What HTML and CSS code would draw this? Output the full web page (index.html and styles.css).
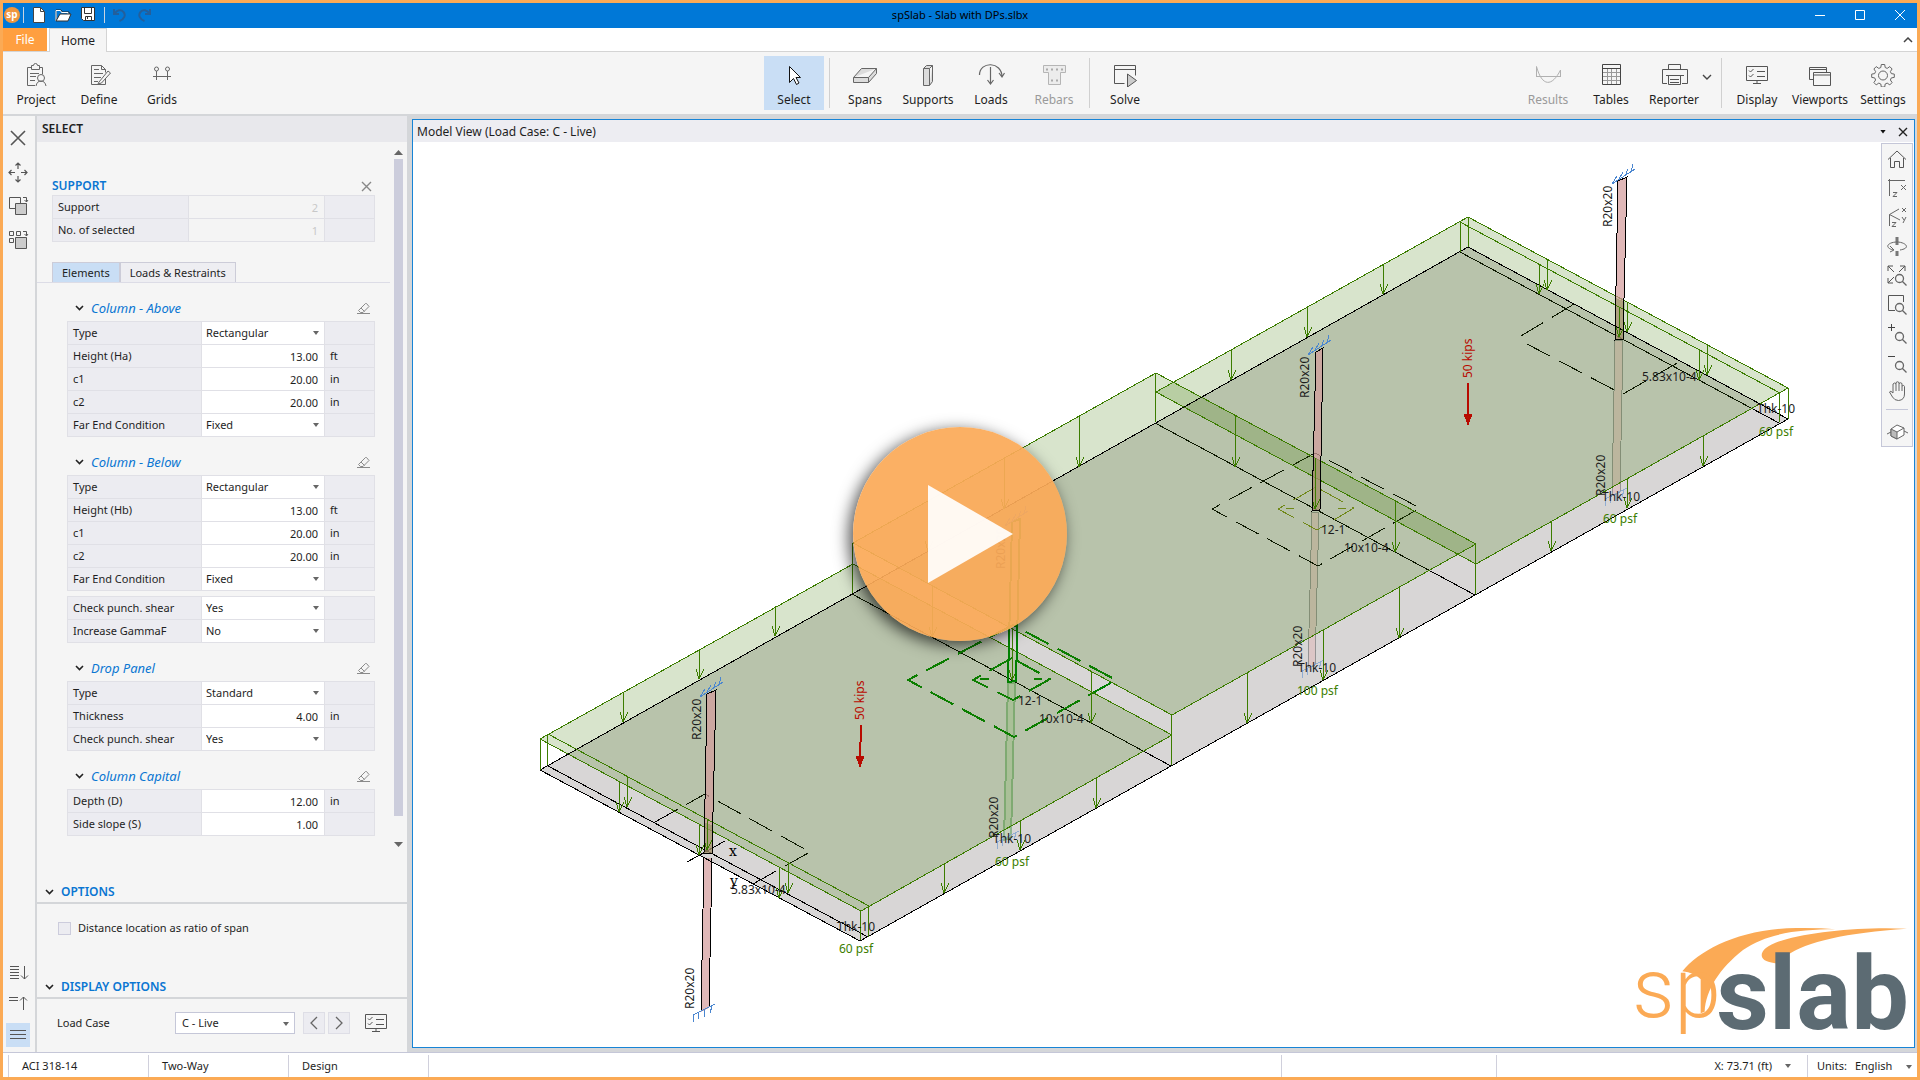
FILE: index.html
```html
<!DOCTYPE html>
<html lang="en">
<head>
<meta charset="utf-8">
<title>spSlab - Slab with DPs.slbx</title>
<link rel="stylesheet" href="styles.css">
</head>
<body>
<svg class="defs" aria-hidden="true">
  <defs>
    <symbol id="eraser" viewBox="0 0 14 12"><path d="M1 11.5h13M2.500 8.500l7-7h1l2.500 3-6 6H4.500l-2-2zM5 6l3.500 3.500" fill="none" stroke="#8a8a8a"/></symbol>
    <symbol id="chev" viewBox="0 0 9 6"><path d="M1 1l3.500 3.500L8 1" fill="none" stroke="#222" stroke-width="1.600"/></symbol>
    <symbol id="monitor" viewBox="0 0 24 20"><path d="M1.500 1.500h21v14h-21zM12 15.500v3M8 18.500h8M4 5.500l1.500 1.500 3-3M4 10.500l1.500 1.500 3-3M12 6.500h8M12 11.500h8" fill="none" stroke="#555"/></symbol>
    <symbol id="lens" viewBox="0 0 24 24"><path d="M10.500 15.500a4 4 0 1 1 8 0a4 4 0 1 1-8 0M17.500 18.500l4 4" fill="none" stroke="#666" stroke-width="1.300"/></symbol>
  </defs>
</svg>

<header class="titlebar">
  <div class="quick">
    <svg class="app-mark" width="16" height="16" viewBox="0 0 16 16"><circle cx="8" cy="8" r="8" fill="#f0963c"/><text x="8" y="11" text-anchor="middle" font-size="10" font-weight="700" fill="#fff">sp</text></svg>
    <span class="bar"></span>
    <button aria-label="New"><svg width="14" height="16" viewBox="0 0 14 16"><path d="M1.500.500h7l4 4v11h-11z" fill="#fff" stroke="#444"/><path d="M8.500.500v4h4" fill="none" stroke="#444"/></svg></button>
    <button aria-label="Open"><svg width="17" height="14" viewBox="0 0 17 14"><path d="M1 13V2h5l1 2h7v2" fill="#0078d7" stroke="#222"/><path d="M1 13V2.500h4.500l1 2H13V6" fill="none" stroke="#fff"/><path d="M1 13l4-7h11l-3 7z" fill="#fff" stroke="#333"/></svg></button>
    <button aria-label="Save"><svg width="15" height="15" viewBox="0 0 15 15"><path d="M.500.500h13v13H2.500l-2-2z" fill="#fff" stroke="#333"/><path d="M3.500.500v6h7v-6M4.500 13.500v-4h6v4M6.500 10v2" fill="none" stroke="#333"/></svg></button>
    <span class="bar second"></span>
    <button aria-label="Undo" disabled><svg width="13" height="14" viewBox="0 0 13 14"><path d="M1 1v5h5M1.500 5.500C4 2 8 1 10.500 4s1 7-4 9" fill="none" stroke="#235f9c" stroke-width="2"/></svg></button>
    <button aria-label="Redo" disabled><svg width="13" height="14" viewBox="0 0 13 14"><path d="M12 1v5H7M11.500 5.500C9 2 5 1 2.500 4s-1 7 4 9" fill="none" stroke="#235f9c" stroke-width="2"/></svg></button>
  </div>
  <h1>spSlab - Slab with DPs.slbx</h1>
  <div class="wincontrols">
    <button aria-label="Minimize"><svg width="12" height="12"><path d="M1 6.500h10" stroke="#fff"/></svg></button>
    <button aria-label="Maximize"><svg width="12" height="12"><path d="M1.500 1.500h9v9h-9z" fill="none" stroke="#fff"/></svg></button>
    <button aria-label="Close"><svg width="12" height="12"><path d="M1 1l10 10M11 1L1 11" stroke="#fff"/></svg></button>
  </div>
</header>

<nav class="tabs">
  <button class="file">File</button>
  <button class="home">Home</button>
  <button class="collapse" aria-label="Collapse ribbon"><svg width="10" height="6" viewBox="0 0 10 6"><path d="M1 5l4-4 4 4" fill="none" stroke="#444" stroke-width="1.500"/></svg></button>
</nav>

<div class="ribbon">
  <div class="group">
    <button class="tool"><svg viewBox="0 0 24 24"><path d="M7 4.500H3.500v18H11M15 4.500h3.500v7M7.500 2.500h2q0-2 2-2t2 2h2v4h-8zM6 10.500h9M6 13.500h6M6 17.500h5" fill="none" stroke="#666"/><circle cx="17" cy="15" r="3.500" fill="#f5f5f5" stroke="#666"/><path d="M12 23q1-5 5-5t5 5" fill="none" stroke="#666"/></svg>Project</button>
    <button class="tool"><svg viewBox="0 0 24 24"><path d="M4.500 2.500h10l4 4v3M18.500 15v6.500h-14v-19M14.500 2.500v4h4M7 6.500h5M7 10.500h9M7 14.500h7M7 18.500h4" fill="none" stroke="#666"/><path d="M12 19l9-11 2.500 2-9 10-3.500 1z" fill="#f5f5f5" stroke="#666"/></svg>Define</button>
    <button class="tool"><svg viewBox="0 0 24 24"><path d="M3 13.500h18M6.500 8v9M17.500 8v9" stroke="#666"/><circle cx="6.500" cy="6" r="2" fill="none" stroke="#666"/><circle cx="17.500" cy="6" r="2" fill="none" stroke="#666"/></svg>Grids</button>
  </div>
  <div class="group">
    <button class="tool on"><svg viewBox="0 0 24 24"><path d="M7.500 3.500v16l4-4 3 6 2.500-1.500-3-5.500h4.500z" fill="#fff" stroke="#111"/></svg>Select</button>
    <span class="sep"></span>
    <button class="tool"><svg viewBox="0 0 26 24"><path d="M1.500 14.500l8-9h15l-8 9zM1.500 14.500v5h15l8-9v-5M16.500 14.500v5" fill="#dcdcdc" stroke="#666"/></svg>Spans</button>
    <button class="tool"><svg viewBox="0 0 24 24"><path d="M7.500 5.500h6v17h-6zM7.500 5.500l3-3h6l-3 3M16.500 2.500v16l-3 4" fill="#dcdcdc" stroke="#666"/></svg>Supports</button>
    <button class="tool"><svg viewBox="0 0 26 24"><path d="M1.500 12C1.500-2 24-2 24 14M21 10l3 4 2.500-4M12.500 4v17M9.500 17l3 4 3-4" fill="none" stroke="#666" stroke-width="1.200"/></svg>Loads</button>
    <button class="tool" disabled><svg viewBox="0 0 24 24"><path d="M1.500 2.500h22v7h-5v12h-12v-12h-5z" fill="#ececec" stroke="#b5b5b5"/><path d="M4 6.500h2M9 6.500h2M14 6.500h2M19 6.500h2M9 17.500h2M14 17.500h2" stroke="#aaa" stroke-width="2"/></svg>Rebars</button>
    <span class="sep"></span>
    <button class="tool"><svg viewBox="0 0 24 24"><path d="M11.500 20.500h-10v-18h21v10M1.500 6.500h21" fill="none" stroke="#555"/><path d="M14.500 11v13l9-6.500z" fill="#ccc" stroke="#555"/></svg>Solve</button>
  </div>
  <div class="group">
    <button class="tool" disabled><svg viewBox="0 0 26 24"><path d="M1.500 14V3.500C7 24 17 24 25.500 7v7M1 13.500h25" fill="none" stroke="#b0b0b0"/></svg>Results</button>
    <button class="tool"><svg viewBox="0 0 24 24"><path d="M3.500 1.500h18v20h-18zM3.500 5.500h18" fill="none" stroke="#444"/><path d="M4 9.500h17M4 13.500h17M4 17.500h17M8.500 6v15M12.500 6v15M17.500 6v15" stroke="#999"/></svg>Tables</button>
    <button class="tool"><svg viewBox="0 0 28 24"><path d="M8.500 6V1.500h12V6M7 20.500H2.500v-14h25v14H22M8.500 12.500h12v9h-12zM6 12.500h18M10 16.500h9M10 19.500h9" fill="none" stroke="#555"/></svg>Reporter</button>
    <button class="more" aria-label="Reporter options"><svg width="10" height="6" viewBox="0 0 10 6"><path d="M1 1l4 4 4-4" fill="none" stroke="#444" stroke-width="1.400"/></svg></button>
    <span class="sep"></span>
    <button class="tool"><svg viewBox="0 -2 24 24"><use href="#monitor" width="24" height="20"/></svg>Display</button>
    <button class="tool"><svg viewBox="0 0 24 24"><path d="M5 16.500H1.500v-12h17V9M1.500 6.500h17M5.500 9.500h17v13h-17zM5.500 12h17" fill="none" stroke="#555"/></svg>Viewports</button>
    <button class="tool"><svg viewBox="0 0 24 24"><path d="M10.300 1.500h3.400l.500 3 2 .900 2.600-1.800 2.300 2.400-1.700 2.500.900 2.100 3 .500v3.300l-3 .500-.900 2.100 1.700 2.500-2.300 2.400-2.600-1.800-2 .900-.500 3h-3.400l-.500-3-2-.900-2.600 1.800-2.300-2.400 1.700-2.500-.900-2.100-3-.500v-3.300l3-.500.900-2.100-1.700-2.500 2.300-2.400 2.600 1.800 2-.900z" fill="none" stroke="#666"/><circle cx="12" cy="12.500" r="4.500" fill="none" stroke="#666"/></svg>Settings</button>
  </div>
</div>

<main class="work">
  <aside class="strip">
    <button aria-label="Delete"><svg viewBox="0 0 24 24"><path d="M5 5l14 14M19 5L5 19" stroke="#555" stroke-width="1.600"/></svg></button>
    <button aria-label="Move"><svg viewBox="0 0 24 24"><path d="M12 9V3M9.500 5.500L12 3l2.500 2.500M12 16v6M9.500 19.500L12 22l2.500-2.500M9 12.500H3M5.500 10L3 12.500 5.500 15M15 12.500h6M18.500 10l2.500 2.500-2.500 2.500" fill="none" stroke="#555" stroke-width="1.200"/></svg></button>
    <button aria-label="Duplicate"><svg viewBox="0 0 24 24"><path d="M9 14.500H3.500v-11h11V9M17 3.500h3.500V8M18.500 6l2 2 1.500-2" fill="none" stroke="#555"/><path d="M9.500 9.500h11v11h-11z" fill="#ccc" stroke="#555"/></svg></button>
    <button aria-label="Duplicate as grid"><svg viewBox="0 0 24 24"><path d="M3.500 3.500h4v4h-4zM10.500 3.500h4v4h-4zM3.500 10.500h4v4h-4zM17 3.500h3.500V8M18.500 6l2 2 1.500-2" fill="none" stroke="#555"/><path d="M9.500 9.500h11v11h-11z" fill="#ccc" stroke="#555"/></svg></button>
    <span class="push"></span>
    <button aria-label="Expand all"><svg viewBox="0 0 24 24"><path d="M4 5.500h9M4 8.500h9M4 11.500h9M4 14.500h9M4 17.500h9M18.500 5v13M15 14.500l3.500 3.500 3.500-3.500" fill="none" stroke="#555"/></svg></button>
    <button aria-label="Collapse all"><svg viewBox="0 0 24 24"><path d="M3 5.500h9M3 8.500h9M17.500 18V5M14 8.500L17.500 5 21 8.500" fill="none" stroke="#555"/></svg></button>
    <button class="on" aria-label="Show list"><svg viewBox="0 0 24 24"><path d="M4 7.500h16M4 11.500h16M4 15.500h16" stroke="#555"/></svg></button>
  </aside>

  <section class="panel">
    <h2 class="head">SELECT</h2>
    <div class="scroller">
      <div class="props">
        <div class="sup"><h3>SUPPORT</h3><button aria-label="Clear selection"><svg width="11" height="11"><path d="M1 1l9 9M10 1l-9 9" stroke="#888" stroke-width="1.400"/></svg></button></div>
        <table class="wide">
          <tr><th><label for="s1">Support</label></th><td class="off"><input id="s1" value="2" disabled></td><td></td></tr>
          <tr><th><label for="s2">No. of selected</label></th><td class="off"><input id="s2" value="1" disabled></td><td></td></tr>
        </table>
        <div class="subtabs"><button class="on">Elements</button><button>Loads &amp; Restraints</button></div>

        <div class="sec"><svg class="cv"><use href="#chev"/></svg><h4>Column - Above</h4><button aria-label="Reset column above"><svg class="er"><use href="#eraser"/></svg></button></div>
        <table>
          <tr><th><label for="a1">Type</label></th><td class="pick"><select id="a1"><option>Rectangular</option></select></td><td></td></tr>
          <tr><th><label for="a2">Height (Ha)</label></th><td><input id="a2" value="13.00"></td><td>ft</td></tr>
          <tr><th><label for="a3">c1</label></th><td><input id="a3" value="20.00"></td><td>in</td></tr>
          <tr><th><label for="a4">c2</label></th><td><input id="a4" value="20.00"></td><td>in</td></tr>
          <tr><th><label for="a5">Far End Condition</label></th><td class="pick"><select id="a5"><option>Fixed</option></select></td><td></td></tr>
        </table>

        <div class="sec"><svg class="cv"><use href="#chev"/></svg><h4>Column - Below</h4><button aria-label="Reset column below"><svg class="er"><use href="#eraser"/></svg></button></div>
        <table>
          <tr><th><label for="b1">Type</label></th><td class="pick"><select id="b1"><option>Rectangular</option></select></td><td></td></tr>
          <tr><th><label for="b2">Height (Hb)</label></th><td><input id="b2" value="13.00"></td><td>ft</td></tr>
          <tr><th><label for="b3">c1</label></th><td><input id="b3" value="20.00"></td><td>in</td></tr>
          <tr><th><label for="b4">c2</label></th><td><input id="b4" value="20.00"></td><td>in</td></tr>
          <tr><th><label for="b5">Far End Condition</label></th><td class="pick"><select id="b5"><option>Fixed</option></select></td><td></td></tr>
        </table>
        <table class="next">
          <tr><th><label for="p1">Check punch. shear</label></th><td class="pick"><select id="p1"><option>Yes</option></select></td><td></td></tr>
          <tr><th><label for="p2">Increase GammaF</label></th><td class="pick"><select id="p2"><option>No</option></select></td><td></td></tr>
        </table>

        <div class="sec"><svg class="cv"><use href="#chev"/></svg><h4>Drop Panel</h4><button aria-label="Reset drop panel"><svg class="er"><use href="#eraser"/></svg></button></div>
        <table>
          <tr><th><label for="d1">Type</label></th><td class="pick"><select id="d1"><option>Standard</option></select></td><td></td></tr>
          <tr><th><label for="d2">Thickness</label></th><td><input id="d2" value="4.00"></td><td>in</td></tr>
          <tr><th><label for="d3">Check punch. shear</label></th><td class="pick"><select id="d3"><option>Yes</option></select></td><td></td></tr>
        </table>

        <div class="sec"><svg class="cv"><use href="#chev"/></svg><h4>Column Capital</h4><button aria-label="Reset column capital"><svg class="er"><use href="#eraser"/></svg></button></div>
        <table>
          <tr><th><label for="c1">Depth (D)</label></th><td><input id="c1" value="12.00"></td><td>in</td></tr>
          <tr><th><label for="c2">Side slope (S)</label></th><td><input id="c2" value="1.00"></td><td></td></tr>
        </table>
      </div>
      <div class="scrollbar"><i class="up"></i><b></b><i class="down"></i></div>
    </div>

    <h3 class="fold"><svg class="cv"><use href="#chev"/></svg>OPTIONS</h3>
    <div class="opts"><label><input type="checkbox">Distance location as ratio of span</label></div>
    <h3 class="fold"><svg class="cv"><use href="#chev"/></svg>DISPLAY OPTIONS</h3>
    <div class="case">
      <label for="lc">Load Case</label>
      <span class="pick boxed"><select id="lc"><option>C - Live</option></select></span>
      <button class="step" aria-label="Previous load case"><svg width="8" height="14"><path d="M7 1L1 7l6 6" fill="none" stroke="#666" stroke-width="1.300"/></svg></button>
      <button class="step" aria-label="Next load case"><svg width="8" height="14"><path d="M1 1l6 6-6 6" fill="none" stroke="#666" stroke-width="1.300"/></svg></button>
      <button class="plain" aria-label="Display settings"><svg width="24" height="20"><use href="#monitor"/></svg></button>
    </div>
  </section>

  <section class="view">
    <div class="viewhead"><h2>Model View (Load Case: C - Live)</h2>
      <button aria-label="View menu"><i class="down dark"></i></button>
      <button aria-label="Close view"><svg width="10" height="10"><path d="M1 1l8 8M9 1L1 9" stroke="#222" stroke-width="1.400"/></svg></button>
    </div>
    <div class="canvas">
      <svg class="model" viewBox="413 142 1501 905">
        <defs>
          <path id="a30" d="M0 0l-1 30M-4 20l3 10 5-10"/>
          <path id="a51" d="M0 0l-1 51M-4 41l3 10 5-10"/>
          <path id="fix" d="M-5 2L18-13M-5 2l5-8M2-3l4-7M8-6l3-7M14-10l2-8"/>
          <path id="fixb" d="M-6 2L16-9M-6 9l1-7M-1 6l1-7M5 4l1-8M11 0l2-7"/>
        </defs>
        <polygon class="slab" points="540,770 1468,247 1788,419 860,941"/>
        <g class="low">
          <path class="pk" d="M1308 668L1312 512H1319L1315 665zM1612 496L1615 340H1623L1620 492z"/>
          <path class="gn" d="M1004 840L1008 683H1015L1011 837z"/>
          <g class="hatch"><use href="#fixb" x="1003" y="840"/><use href="#fixb" x="1308" y="669"/><use href="#fixb" x="1611" y="497"/></g>
        </g>
        <path class="blk" d="M548 766L868 937M1460 252L1779 423M1155 423L1475 595M852 594L1171 766M687 862L725 841"/>
        <g class="dash">
          <path d="M655 822L705 794L810 852L753 884"/>
          <path d="M1574 304L1516 339M1527 344L1622 394M1623 394L1679 362"/>
          <path d="M1315 453L1212 509L1318 566L1420 508z"/>
          <path class="sel" d="M1013 625L908 680L1014 737L1116 680z"/>
          <path class="sel" d="M1012 658L973 680L1013 700L1050 679zM980 679h9M1034 679h8"/>
          <path class="olive" d="M1316 487L1278 509L1317 530L1354 508zM1286 508h8M1338 508h8"/>
        </g>
        <g class="load">
          <polygon points="540,739 861,911 1172,735 853,564"/>
          <polygon points="853,543 1172,715 1476,544 1156,373"/>
          <polygon points="1156,392 1476,564 1788,388 1468,217"/>
        </g>
        <path class="col" d="M704 858L701 1012L709 1008L712 858z"/>
        <path class="col" d="M704 853L707 694L716 690L712 853zM1312 511L1316 352L1323 348L1320 510zM1615 340L1618 181L1627 177L1623 339z"/>
        <path class="shade" d="M704 853V822L713 826L712 853zM1312 511L1314 457L1321 461L1320 510zM1615 340L1616 298L1625 302L1623 339z"/>
        <path class="blk" d="M540 770L1468 247L1788 419L860 941z"/>
        <g class="lines">
          <path d="M548 734L869 906M1460 222L1780 393M540 739V770M548 734L547 766M861 911L860 941M869 906L868 937M853 543L852 594M1172 715L1171 766M1156 373L1155 423M1476 544L1475 595M1788 388V419M1780 393L1779 423M1468 217V247M1460 222V252"/>
          <use href="#a30" x="624" y="692"/><use href="#a30" x="700" y="649"/><use href="#a30" x="776" y="606"/>
          <use href="#a30" x="945" y="863"/><use href="#a30" x="1021" y="820"/><use href="#a30" x="1097" y="778"/>
          <use href="#a30" x="620" y="782"/><use href="#a30" x="700" y="825"/><use href="#a30" x="780" y="868"/>
          <use href="#a30" x="628" y="777"/><use href="#a30" x="708" y="820"/><use href="#a30" x="789" y="863"/>
          <use href="#a30" x="1232" y="350"/><use href="#a30" x="1308" y="307"/><use href="#a30" x="1384" y="264"/>
          <use href="#a30" x="1552" y="521"/><use href="#a30" x="1628" y="478"/><use href="#a30" x="1704" y="436"/>
          <use href="#a30" x="1548" y="260"/><use href="#a30" x="1628" y="302"/><use href="#a30" x="1708" y="345"/>
          <use href="#a30" x="1540" y="264"/><use href="#a30" x="1620" y="307"/><use href="#a30" x="1700" y="350"/>
          <use href="#a51" x="929" y="500"/><use href="#a51" x="1005" y="458"/><use href="#a51" x="1080" y="416"/>
          <use href="#a51" x="1248" y="672"/><use href="#a51" x="1324" y="629"/><use href="#a51" x="1400" y="587"/>
          <use href="#a51" x="933" y="586"/><use href="#a51" x="1013" y="629"/><use href="#a51" x="1092" y="672"/>
          <use href="#a51" x="1236" y="416"/><use href="#a51" x="1316" y="458"/><use href="#a51" x="1396" y="501"/>
        </g>
        <path class="blk" d="M704 858L701 1012M709 1008L712 858M704 853L707 694L716 690L712 853zM1312 511L1316 352L1323 348L1320 510zM1615 340L1618 181L1627 177L1623 339z"/>
        <path class="selcol" d="M1008 682L1012 522L1020 519L1016 681z"/>
        <g class="hatch"><use href="#fix" x="705" y="695"/><use href="#fix" x="1010" y="524"/><use href="#fix" x="1313" y="353"/><use href="#fix" x="1617" y="182"/><use href="#fixb" x="699" y="1013"/></g>
        <g class="point"><path d="M861 725L860 760M1468 383V418"/><path d="M857 757l3 8 3-8zM1465 415l3 8 3-8z"/></g>
        <g class="txt">
          <text transform="translate(701 740) rotate(-90)">R20x20</text>
          <text transform="translate(694 1009) rotate(-90)">R20x20</text>
          <text transform="translate(1005 569) rotate(-90)">R20x20</text>
          <text transform="translate(998 838) rotate(-90)">R20x20</text>
          <text transform="translate(1309 398) rotate(-90)">R20x20</text>
          <text transform="translate(1302 667) rotate(-90)">R20x20</text>
          <text transform="translate(1612 227) rotate(-90)">R20x20</text>
          <text transform="translate(1605 496) rotate(-90)">R20x20</text>
          <text x="837" y="931">Thk-10</text><text x="993" y="843">Thk-10</text><text x="1298" y="672">Thk-10</text><text x="1602" y="501">Thk-10</text><text x="1757" y="413">Thk-10</text>
          <text x="731" y="894">5.83x10-4</text><text x="1642" y="381">5.83x10-4</text>
          <text x="1018" y="705">12-1</text><text x="1321" y="534">12-1</text>
          <text x="1039" y="723">10x10-4</text><text x="1344" y="552">10x10-4</text>
          <text class="axis" x="729" y="856">x</text><text class="axis" x="730" y="886">y</text>
          <g class="psf"><text x="839" y="953">60 psf</text><text x="995" y="866">60 psf</text><text x="1297" y="695">100 psf</text><text x="1603" y="523">60 psf</text><text x="1759" y="436">60 psf</text></g>
          <g class="kips"><text transform="translate(864 720) rotate(-90)">50 kips</text><text transform="translate(1472 378) rotate(-90)">50 kips</text></g>
        </g>
      </svg>

      <div class="viewtools">
        <button aria-label="Home view"><svg viewBox="0 0 24 24"><path d="M3 12.500L12 4l9 8.500M5.500 11v9.500h4v-6h5v6h4V11" fill="none" stroke="#555"/></svg></button>
        <button aria-label="XZ view"><svg viewBox="0 0 24 24"><path d="M3 4.500h17M4.500 3v17" stroke="#666"/><path d="M16 9l5 5M21 9l-5 5M8 16.500h4l-4 4h4" fill="none" stroke="#666"/></svg></button>
        <button aria-label="Isometric view"><svg viewBox="0 0 24 24"><path d="M14 4L4.500 9.500V21M4.500 9.500L15 15" fill="none" stroke="#666"/><path d="M17 3l4 4M21 3l-4 4M17 12l2 3M21 12l-3 6M7 17.500h4l-4 4h4" fill="none" stroke="#666"/></svg></button>
        <button aria-label="Rotate"><svg viewBox="0 0 24 24"><path d="M12 3v8M12 17v5" stroke="#777" stroke-width="3"/><path d="M15 16c12-2 5-8-3-8s-14 5-4 8M5 12l4 4-4 2" fill="none" stroke="#666"/></svg></button>
        <button aria-label="Zoom extents"><svg viewBox="0 0 24 24"><path d="M3 8V3h5M3 3l6 6M15 3h5v5M20 3l-6 6M3 15v5h5M3 20l6-6" fill="none" stroke="#555"/><use href="#lens" width="24" height="24"/></svg></button>
        <button aria-label="Zoom window"><svg viewBox="0 0 24 24"><path d="M10 18.500H3.500v-15h15V10" fill="none" stroke="#555"/><use href="#lens" width="24" height="24"/></svg></button>
        <button aria-label="Zoom in"><svg viewBox="0 0 24 24"><path d="M3 6.500h7M6.500 3v7" stroke="#444"/><use href="#lens" width="24" height="24"/></svg></button>
        <button aria-label="Zoom out"><svg viewBox="0 0 24 24"><path d="M3 6.500h7" stroke="#444"/><use href="#lens" width="24" height="24"/></svg></button>
        <button aria-label="Pan"><svg viewBox="0 0 24 24"><path d="M8 14V5q1.500-2 3 0v7M11 5V3.500q1.500-1.500 3 0V12M14 4.500q1.500-1.500 3 0V12M17 7q2-1.500 2.500.500V15q0 6-6 6.500-4 0-6-3.500l-3-5q1-2 3.500 1" fill="none" stroke="#666"/></svg></button>
        <hr>
        <button aria-label="Solid view"><svg viewBox="0 0 24 24"><path d="M6 10l6-4 7 3v7l-7 4-6-3z" fill="#fff" stroke="#666"/><path d="M6 10l6 3v7l-6-3z" fill="#bbb" stroke="#666"/><path d="M12 13l7-4M2 15l4-2M19 12l4 2" stroke="#666"/></svg></button>
      </div>

      <svg class="brand" viewBox="100 75 831 339" role="img" aria-label="spslab">
        <g fill="#fbaa55">
          <path d="M248 214C300 150 420 86 590 84Q660 83 707 88C600 88 500 100 430 150C360 205 318 270 315 335L303 340V238Q285 218 248 214z"/>
          <path d="M922 86C800 80 640 92 545 122C480 142 475 172 500 183Q510 188 540 192L562 166C620 125 740 98 922 86z"/>
          <text class="sp" x="98" y="352">sp</text>
        </g>
        <text class="sl" x="350" y="388">slab</text>
      </svg>
    </div>
  </section>
</main>

<footer class="status">
  <span>ACI 318-14</span><span>Two-Way</span><span>Design</span><span class="grow"></span><span class="mid"></span>
  <span class="coord">X: 73.71 (ft)<i class="down"></i></span>
  <span class="units"><label for="un">Units:</label><span class="pick"><select id="un"><option>English</option></select></span></span>
</footer>

<button class="play" aria-label="Play video"><svg viewBox="0 0 214 214"><path d="M75 58v98l85-49z" fill="#fff" fill-opacity=".920"/></svg></button>
</body>
</html>
```
FILE: styles.css
```css
* { box-sizing: border-box; }

body {
  margin: 0;
  min-height: 100vh;
  display: flex;
  flex-direction: column;
  border: 3px solid #fbaa55;
  background: #f5f5f5;
  color: #1e1e1e;
  font: 11px/16px "Noto Sans", "Open Sans", sans-serif;
  position: relative;
}

h1, h2, h3, h4 { margin: 0; font-size: inherit; font-weight: 400; }
button, input, select { font: inherit; color: inherit; }
button { border: 0; padding: 0; background: none; display: flex; align-items: center; justify-content: center; }
.defs { position: absolute; width: 0; height: 0; }

.titlebar {
  height: 25px;
  padding-bottom: 2px;
  background: #0078d7;
  display: grid;
  grid-template-columns: 1fr auto 1fr;
  align-items: center;
  color: #000;
}
.quick { display: flex; align-items: center; gap: 8px; padding-left: 1px; }
.quick .bar { width: 1px; height: 16px; background: #c8d4e0; margin: 0 -2px 0 -5px; }
.quick .second { margin-left: -1px; }
.quick button { width: 17px; }
.wincontrols { display: flex; justify-content: flex-end; margin-right: -3px; }
.wincontrols button { width: 40px; }

.tabs { display: flex; height: 24px; background: #fff; border-bottom: 1px solid #d4d4d4; }
.tabs button { font-size: 12px; }
.tabs .file { width: 44px; background: #ff9f40; color: #fff; }
.tabs .home { width: 58px; margin: 0 0 -1px 2px; background: #f5f5f5; border: 1px solid #d4d4d4; border-bottom: 0; }
.tabs .collapse { margin-left: auto; width: 18px; }

.ribbon {
  height: 62px;
  display: grid;
  grid-template-columns: 1fr auto 1fr;
  padding: 4px 4px 4px 3px;
}
.group { display: flex; gap: 3px; }
.group:last-child { justify-content: flex-end; }
.tool { width: 60px; flex-direction: column; justify-content: flex-start; padding-top: 7px; gap: 5px; font-size: 12px; }
.tool svg { height: 24px; width: 28px; }
.tool:disabled { color: #9a9a9a; }
.on { background: #c9def5; }
.sep { width: 1px; margin: 2px; background: #d0d0d0; }
.more { width: 12px; height: 42px; margin: 0 3px 0 -6px; }

.work {
  flex: 1;
  display: flex;
  background: #d4d6d9;
  padding-top: 2px;
}
.strip { width: 32px; background: #f5f5f5; display: flex; flex-direction: column; align-items: center; padding: 10px 2px 5px 0; gap: 10px; }
.strip button { width: 24px; height: 24px; }
.strip svg, .viewtools svg { width: 24px; height: 24px; }
.strip .push { flex: 1; }
.strip .push ~ button { margin-top: -3px; }
.panel { width: 370px; margin: 0 5px 0 2px; background: #f5f5f5; display: flex; flex-direction: column; }
.head { height: 26px; padding: 5px; background: #e8e8ec; font-weight: 600; font-size: 12px; }
.scroller { display: flex; justify-content: space-between; height: 708px; padding: 8px 4px 0 0; }
.props { width: 353px; }
.sup { display: flex; justify-content: space-between; padding: 28px 18px 1px 15px; height: 45px; }
.sup h3, .fold { color: #0a76d2; font-weight: 600; font-size: 12px; }

table { width: 308px; margin-left: 30px; border-collapse: collapse; table-layout: fixed; }
table.wide { width: 323px; margin-left: 15px; }
table.next { margin-top: 5px; }
tr { height: 23px; }
th, td { border: 1px solid #e0e0e6; padding: 0; height: 23px; background: #ececf1; font-weight: 400; text-align: left; }
th { width: 134px; padding-left: 5px; }
td:nth-child(2) { width: 123px; background: #fff; }
td:last-child { padding-left: 5px; }
.wide th, .wide td:nth-child(2) { width: 136px; }
td.off:nth-child(2) { background: #f4f4f4; color: #c8c8c8; }
td input { display: block; width: 100%; height: 20px; border: 0; background: none; text-align: right; padding: 0 6px; }
select { appearance: none; display: block; width: 100%; border: 0; background: none; padding: 0 16px 0 4px; height: 20px; }
.pick { position: relative; }
.pick::after, .down, .up { content: ""; width: 6px; height: 4px; background: #666; clip-path: polygon(0 0, 100% 0, 50% 100%); }
.pick::after { position: absolute; right: 5px; top: 9px; pointer-events: none; }

.subtabs { display: flex; margin-top: 20px; padding-left: 15px; height: 21px; border-bottom: 1px solid #dcdce6; }
.subtabs button { border: 1px solid #ccccd8; border-bottom: 0; padding: 0 9px; background: #eeeef2; }
.subtabs .on { background: #c9def5; }
.sec { display: flex; align-items: center; height: 38px; padding: 12px 20px 0 38px; gap: 7px; }
table + .sec { padding-top: 11px; }
.sec h4 { flex: 1; color: #0a76d2; font-style: italic; font-size: 13px; }
.cv { width: 9px; height: 6px; }
.er { width: 14px; height: 12px; }

.scrollbar { width: 9px; display: flex; flex-direction: column; align-items: center; justify-content: space-between; padding-bottom: 3px; }
.scrollbar b { width: 9px; flex: 1; background: #cccddc; margin: 4px 0 26px; }
.scrollbar i { width: 9px; height: 5px; }
.up { clip-path: polygon(50% 0, 100% 100%, 0 100%); }

.fold { display: flex; align-items: center; gap: 7px; padding-left: 8px; margin-top: 34px; height: 20px; border-bottom: 2px solid #d4d6d9; box-sizing: content-box; }
.scroller + .fold { margin-top: 32px; }
.opts { padding: 16px 0 7px 21px; }
.opts label { display: flex; align-items: center; gap: 7px; }
.opts input { appearance: none; width: 13px; height: 13px; margin: 0; border: 1px solid #ccccdc; background: #ececf1; }
.case { display: flex; align-items: center; padding: 13px 0 18px 20px; height: 53px; }
.case label { width: 118px; }
.boxed { width: 120px; height: 22px; border: 1px solid #c5c7d8; background: #fff; margin-right: 8px; }
.boxed select { padding-left: 6px; }
.step { width: 22px; height: 22px; background: #ececf1; border: 1px solid #dedee6; margin-right: 3px; }
.plain { margin-left: 11px; }

.view { flex: 1; margin: 3px 2px 4px 0; border: 1px solid #1784d6; background: #fff; display: flex; flex-direction: column; }
.viewhead { height: 22px; background: #ededf2; display: flex; align-items: center; gap: 12px; padding: 1px 6px 0 4px; }
.viewhead h2 { flex: 1; font-size: 12px; }
.dark { background: #111; }
.canvas { flex: 1; position: relative; }
.model { display: block; width: 100%; height: auto; shape-rendering: crispEdges; fill: none; }

.slab { fill: #d8d6d6; }
.load polygon { fill: rgb(60 120 0 / .2); stroke: #3c7d00; }
.shade { fill: rgb(60 120 0 / .25); }
.lines { stroke: #3c7d00; }
.blk { stroke: #000; }
.col { fill: rgb(211 155 155 / .71); }
.pk { fill: #e0b8b8; }
.low { opacity: .5; }
.low .pk { stroke: #555; }
.low .gn { stroke: #4a9a4a; fill: #b5d0a8; stroke-width: 2; }
.dash { stroke: #000; stroke-dasharray: 26 10; }
.dash .sel { stroke: #008000; stroke-width: 2; }
.dash .olive { stroke: #7d8c1e; }
.selcol { stroke: #008000; stroke-width: 2; }
.hatch { stroke: #4a86d0; }
.point { stroke: #b80a00; stroke-width: 2; }
.point path { fill: #b01400; }
.txt { fill: #1c1c1c; font-size: 12px; }
.psf { fill: #3c7d00; }
.kips { fill: #b80a00; }
.axis { font: 14px "DejaVu Serif", serif; fill: #000; }

.viewtools { position: absolute; top: 1px; right: 1px; width: 32px; border: 1px solid #c5c7d8; background: #f5f5f5; display: flex; flex-direction: column; align-items: center; gap: 5px; padding: 3px 0; }
.viewtools hr { width: 22px; margin: 1px 0 4px; border: 0; border-top: 1px solid #c5c7d8; }
.brand { position: absolute; right: 4px; bottom: 9px; width: 277px; height: 113px; }
.sp { font: 300 250px Roboto, sans-serif; }
.sl { font: 700 308px Roboto, sans-serif; fill: #5c6b73; }

.status { height: 25px; border-top: 1px solid #c5c7d8; background: #fff; display: flex; align-items: stretch; padding: 2px 0 0 5px; }
.status > span { width: 140px; border-left: 1px solid #d0d0dc; padding: 3px 0 0 13px; }
.status > .grow { flex: 1; }
.status > .mid { width: 215px; }
.status > .coord { width: 311px; display: flex; justify-content: flex-end; align-items: center; gap: 13px; padding: 0 16px 0 0; }
.status > .units { width: 110px; display: flex; align-items: center; padding: 0 0 0 9px; gap: 4px; }
.units .pick { flex: 1; }

.play { position: absolute; left: calc(50% - 107px); top: calc(50% - 113px); width: 214px; height: 214px; border-radius: 50%; background: rgb(251 170 88 / .93); box-shadow: -4px 4px 16px rgb(0 0 0 / .7); }
.play svg { width: 100%; height: 100%; }
```
